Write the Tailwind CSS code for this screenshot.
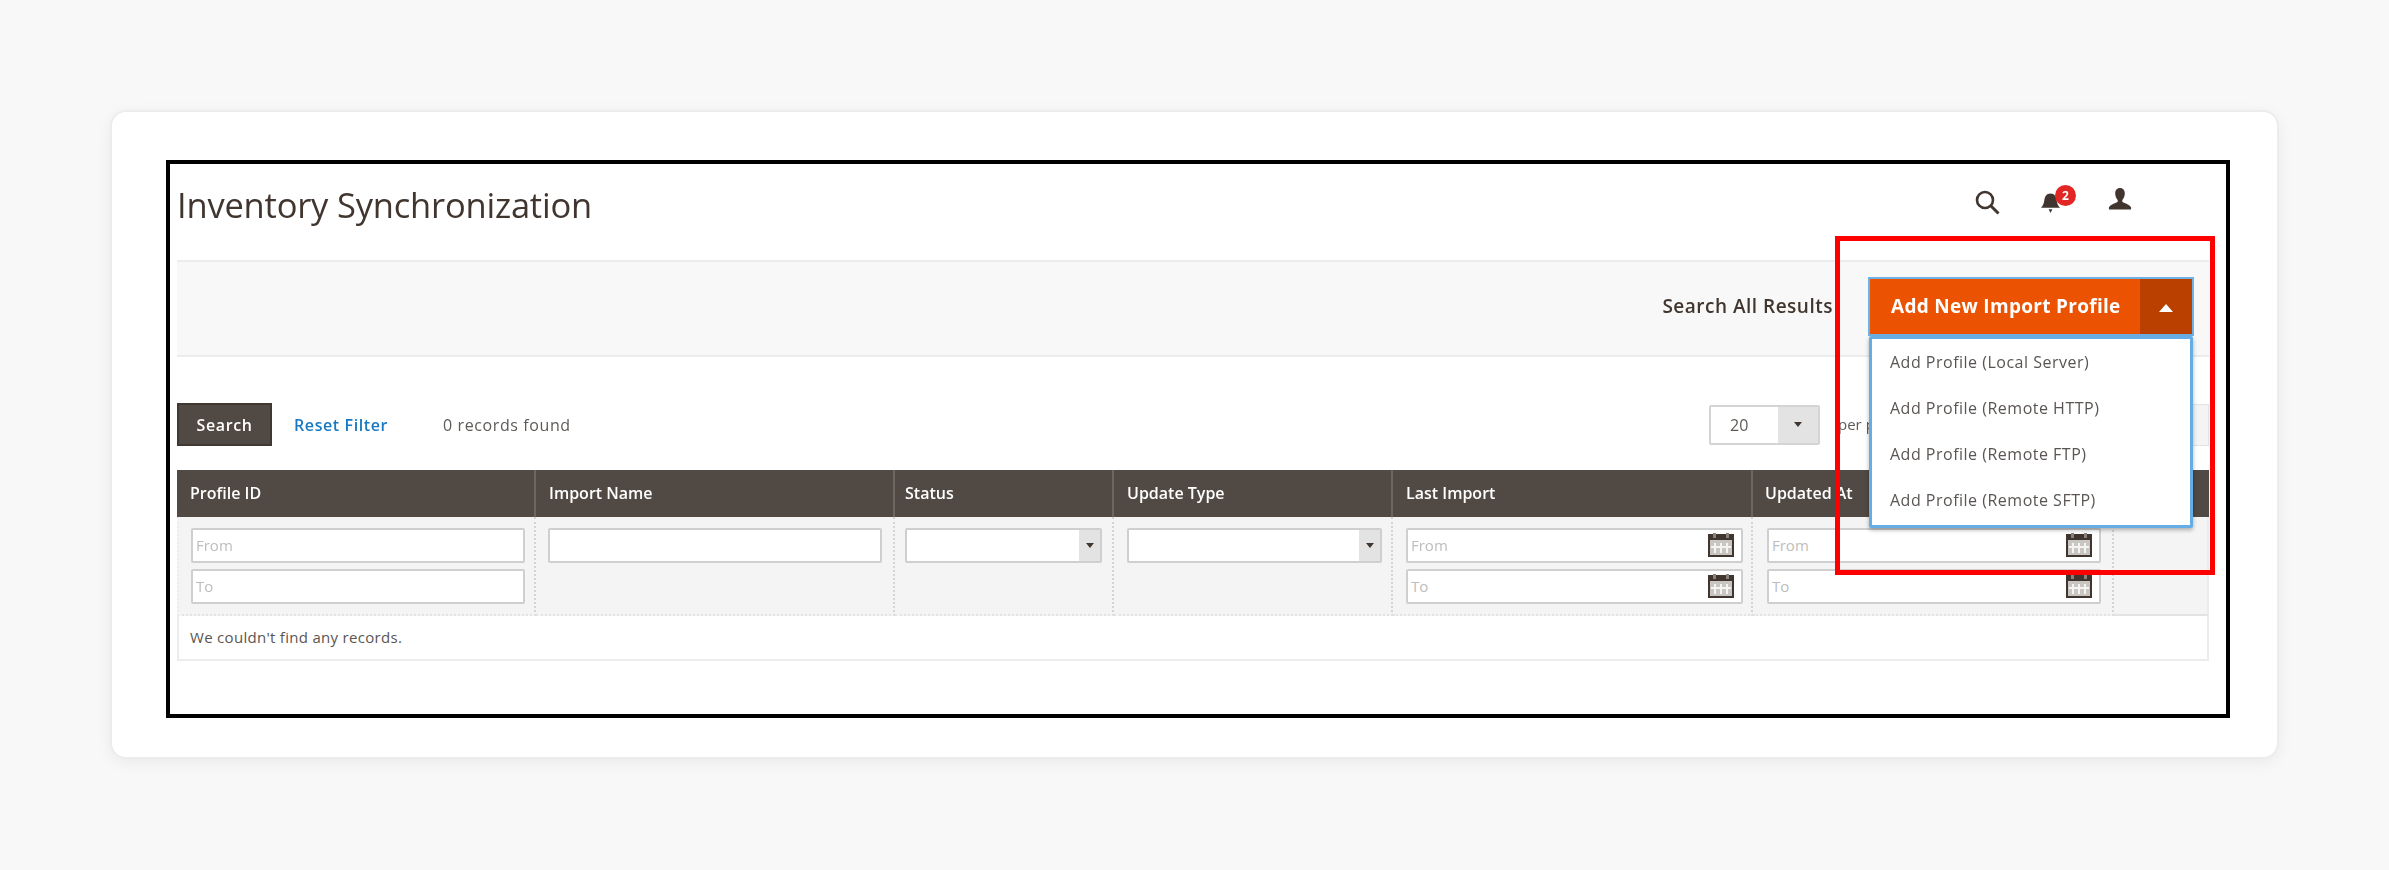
<!DOCTYPE html>
<html lang="en">
<head>
    <meta charset="UTF-8">
    <title>Inventory Synchronization</title>
    <script src="https://cdn.jsdelivr.net/npm/@tailwindcss/browser@4"></script>
</head>
<body class="bg-[#f8f8f8] font-['Open_Sans',sans-serif] text-[#41362f] h-[870px] w-[2389px] overflow-hidden">
    <div class="pl-[110px] pt-[110px]">
        <!-- outer card -->
        <div class="w-[2169px] h-[649px] bg-white rounded-2xl border-2 border-[#ececec] shadow-[0_4px_16px_rgba(0,0,0,0.06)] pl-[54px] pt-[48px]">
            <!-- black frame -->
            <div class="relative w-[2064px] h-[558px] border-4 border-black bg-white">
              <div class="blur-[0.5px] h-full pl-[7px] pr-[17px]">

                <!-- page title -->
                <div class="h-[96px] flex items-start justify-between">
                    <h1 class="mt-[16px] text-[34.500px] leading-[50px] font-normal tracking-[-0.2px] text-[#41362f]">Inventory Synchronization</h1>
                    <div class="relative h-full w-0">
                        <svg class="absolute left-[-235px] top-[25px] w-[26px] h-[26px]" viewBox="0 0 26 26" fill="none" stroke="#41362f"><circle cx="11" cy="11" r="8" stroke-width="2.6"/><path d="M17 17l7.5 7.5" stroke-width="3"/></svg>
                        <svg class="absolute left-[-168px] top-[27px] w-[19px] h-[24px]" viewBox="0 0 20 24" fill="#41362f"><path d="M10 2c4 0 6 3 6.500 7 .4 3.500 1.500 6 3.500 8H0c2-2 3.100-4.500 3.500-8C4 5 6 2 10 2z"/><path d="M8 18.500h4l-2 4z"/></svg>
                        <span class="absolute left-[-154px] top-[21px] w-[21px] h-[21px] rounded-full bg-[#e22626] border-2 border-[#e22626] text-white text-[12px] font-bold leading-[17px] text-center">2</span>
                        <svg class="absolute left-[-101px] top-[23px] w-[24px] h-[24px]" viewBox="0 0 26 26" fill="#41362f"><path d="M13 1c3.300 0 5.200 2.400 5.200 6 0 3-1.300 5.500-2.700 7v2c1.500 1.300 7.500 2.500 9.500 6v2.500H1V22c2-3.500 8-4.700 9.500-6v-2C9.100 12.500 7.800 10 7.800 7c0-3.600 1.900-6 5.200-6z"/></svg>
                    </div>
                </div>

                <!-- page actions -->
                <div class="h-[97px] bg-[#f8f8f8] border-y-2 border-[#ececec] flex items-start justify-end pr-[15px]">
                    <span class="mt-[32px] text-[19px] leading-[24px] font-semibold tracking-[0.500px] mr-[35px] text-[#41362f]">Search All Results</span>
                    <div class="mt-[15px] relative w-[326px] h-[59px] flex border-2 border-[#6eb1e6] z-10">
                        <button class="flex-1 bg-[#eb5202] text-white text-[19px] font-bold tracking-[0.300px] text-left pl-[21px]">Add New Import Profile</button>
                        <button class="w-[52px] bg-[#ba4000] flex items-center justify-center">
                            <span class="mt-[3px] w-0 h-0 border-x-[7px] border-x-transparent border-b-[8px] border-b-white"></span>
                        </button>
                        <ul class="absolute left-[-1px] right-[-1px] top-[57px] h-[192px] bg-white border-[3px] border-[#66ade6] rounded-[2px] shadow-[0_2px_4px_rgba(0,0,0,0.3)] pl-[18px] pt-[11px] text-[16px] tracking-[0.5px] text-[#5a5552] flex flex-col justify-between pb-[13px]">
                            <li>Add Profile (Local Server)</li>
                            <li>Add Profile (Remote HTTP)</li>
                            <li>Add Profile (Remote FTP)</li>
                            <li>Add Profile (Remote SFTP)</li>
                        </ul>
                    </div>
                </div>

                <!-- grid toolbar -->
                <div class="mt-[46px] h-[43px] flex items-center">
                    <button class="w-[95px] h-[43px] bg-[#514943] border-2 border-[#3f3833] text-white text-[16px] font-semibold tracking-[0.6px]">Search</button>
                    <a class="ml-[22px] text-[16px] font-semibold tracking-[0.6px] text-[#1979c3]">Reset Filter</a>
                    <span class="ml-[55px] text-[16px] tracking-[0.6px] text-[#5f5a56]">0 records found</span>
                    <div class="ml-auto w-[500px] flex items-center">
                        <div class="w-[111px] h-[40px] border-2 border-[#d4d4d4] rounded-[2px] flex bg-white">
                            <span class="flex-1 pl-[19px] text-[16px] leading-[36px] text-[#5f5a56]">20</span>
                            <span class="w-[40px] bg-[#e3e3e3] flex items-center justify-center">
                                <span class="w-0 h-0 border-x-[4px] border-x-transparent border-t-[5px] border-t-[#41362f]"></span>
                            </span>
                        </div>
                        <span class="ml-[18px] text-[15px] text-[#5f5a56]">per page</span>
                        <div class="ml-auto w-[100px] h-[42px] bg-[#f4f4f4] border border-[#e3e3e3]"></div>
                    </div>
                </div>

                <!-- table -->
                <div class="mt-[24px] grid grid-cols-[359px_359px_219px_279px_360px_361px_1fr]">
                    <div class="h-[47px] bg-[#514943] border-r-2 border-[#6d655f] pl-[13px] leading-[47px] text-white text-[16px] font-semibold">Profile ID</div>
                    <div class="h-[47px] bg-[#514943] border-r-2 border-[#6d655f] pl-[13px] leading-[47px] text-white text-[16px] font-semibold">Import Name</div>
                    <div class="h-[47px] bg-[#514943] border-r-2 border-[#6d655f] pl-[10px] leading-[47px] text-white text-[16px] font-semibold">Status</div>
                    <div class="h-[47px] bg-[#514943] border-r-2 border-[#6d655f] pl-[13px] leading-[47px] text-white text-[16px] font-semibold">Update Type</div>
                    <div class="h-[47px] bg-[#514943] border-r-2 border-[#6d655f] pl-[13px] leading-[47px] text-white text-[16px] font-semibold">Last Import</div>
                    <div class="h-[47px] bg-[#514943] border-r-2 border-[#6d655f] pl-[12px] leading-[47px] text-white text-[16px] font-semibold">Updated At</div>
                    <div class="h-[47px] bg-[#514943]"></div>

                    <!-- filter row -->
                    <div class="h-[99px] bg-[#f4f4f4] border-l-2 border-b-2 border-r-2 border-l-[#ececec] border-b-[#e3e3e3] border-r-[#d4d4d4] border-dotted pl-[12px] pt-[11px] flex flex-col gap-[6px]">
                        <div class="w-[334px] h-[35px] bg-white border-2 border-[#cfcfcf] rounded-[2px] pl-[3px] text-[15px] leading-[31px] text-[#bdbdbd]">From</div>
                        <div class="w-[334px] h-[35px] bg-white border-2 border-[#cfcfcf] rounded-[2px] pl-[3px] text-[15px] leading-[31px] text-[#bdbdbd]">To</div>
                    </div>
                    <div class="h-[99px] bg-[#f4f4f4] border-b-2 border-r-2 border-b-[#e3e3e3] border-r-[#d4d4d4] border-dotted pl-[12px] pt-[11px]">
                        <div class="w-[334px] h-[35px] bg-white border-2 border-[#cfcfcf] rounded-[2px]"></div>
                    </div>
                    <div class="h-[99px] bg-[#f4f4f4] border-b-2 border-r-2 border-b-[#e3e3e3] border-r-[#d4d4d4] border-dotted pl-[10px] pt-[11px]">
                        <div class="w-[197px] h-[35px] bg-white border-2 border-[#cfcfcf] rounded-[2px] flex justify-end">
                            <span class="w-[21px] bg-[#e3e3e3] flex items-center justify-center"><span class="w-0 h-0 border-x-[4px] border-x-transparent border-t-[5px] border-t-[#41362f]"></span></span>
                        </div>
                    </div>
                    <div class="h-[99px] bg-[#f4f4f4] border-b-2 border-r-2 border-b-[#e3e3e3] border-r-[#d4d4d4] border-dotted pl-[13px] pt-[11px]">
                        <div class="w-[255px] h-[35px] bg-white border-2 border-[#cfcfcf] rounded-[2px] flex justify-end">
                            <span class="w-[21px] bg-[#e3e3e3] flex items-center justify-center"><span class="w-0 h-0 border-x-[4px] border-x-transparent border-t-[5px] border-t-[#41362f]"></span></span>
                        </div>
                    </div>
                    <div class="h-[99px] bg-[#f4f4f4] border-b-2 border-r-2 border-b-[#e3e3e3] border-r-[#d4d4d4] border-dotted pl-[13px] pt-[11px] flex flex-col gap-[6px]">
                        <div class="w-[337px] h-[35px] bg-white border-2 border-[#cfcfcf] rounded-[2px] pl-[3px] text-[15px] leading-[31px] text-[#bdbdbd] flex justify-between">From
                            <svg class="w-[26px] h-[24px] mr-[7px] mt-[3px]" viewBox="0 0 26 24"><rect x="1" y="2" width="24" height="21" fill="#c9c5c1" stroke="#41362f" stroke-width="2"/><rect x="1" y="2" width="24" height="5" fill="#41362f"/><rect x="5" y="0" width="3" height="5" fill="#8a837d"/><rect x="18" y="0" width="3" height="5" fill="#8a837d"/><path d="M7 10v10M13 10v10M19 10v10M3 14h20" stroke="#f4f4f4" stroke-width="2"/></svg>
                        </div>
                        <div class="w-[337px] h-[35px] bg-white border-2 border-[#cfcfcf] rounded-[2px] pl-[3px] text-[15px] leading-[31px] text-[#bdbdbd] flex justify-between">To
                            <svg class="w-[26px] h-[24px] mr-[7px] mt-[3px]" viewBox="0 0 26 24"><rect x="1" y="2" width="24" height="21" fill="#c9c5c1" stroke="#41362f" stroke-width="2"/><rect x="1" y="2" width="24" height="5" fill="#41362f"/><rect x="5" y="0" width="3" height="5" fill="#8a837d"/><rect x="18" y="0" width="3" height="5" fill="#8a837d"/><path d="M7 10v10M13 10v10M19 10v10M3 14h20" stroke="#f4f4f4" stroke-width="2"/></svg>
                        </div>
                    </div>
                    <div class="h-[99px] bg-[#f4f4f4] border-b-2 border-r-2 border-b-[#e3e3e3] border-r-[#d4d4d4] border-dotted pl-[14px] pt-[11px] flex flex-col gap-[6px]">
                        <div class="w-[334px] h-[35px] bg-white border-2 border-[#cfcfcf] rounded-[2px] pl-[3px] text-[15px] leading-[31px] text-[#bdbdbd] flex justify-between">From
                            <svg class="w-[26px] h-[24px] mr-[7px] mt-[3px]" viewBox="0 0 26 24"><rect x="1" y="2" width="24" height="21" fill="#c9c5c1" stroke="#41362f" stroke-width="2"/><rect x="1" y="2" width="24" height="5" fill="#41362f"/><rect x="5" y="0" width="3" height="5" fill="#8a837d"/><rect x="18" y="0" width="3" height="5" fill="#8a837d"/><path d="M7 10v10M13 10v10M19 10v10M3 14h20" stroke="#f4f4f4" stroke-width="2"/></svg>
                        </div>
                        <div class="w-[334px] h-[35px] bg-white border-2 border-[#cfcfcf] rounded-[2px] pl-[3px] text-[15px] leading-[31px] text-[#bdbdbd] flex justify-between">To
                            <svg class="w-[26px] h-[24px] mr-[7px] mt-[3px]" viewBox="0 0 26 24"><rect x="1" y="2" width="24" height="21" fill="#c9c5c1" stroke="#41362f" stroke-width="2"/><rect x="1" y="2" width="24" height="5" fill="#41362f"/><rect x="5" y="0" width="3" height="5" fill="#8a837d"/><rect x="18" y="0" width="3" height="5" fill="#8a837d"/><path d="M7 10v10M13 10v10M19 10v10M3 14h20" stroke="#f4f4f4" stroke-width="2"/></svg>
                        </div>
                    </div>
                    <div class="h-[99px] bg-[#f4f4f4] border-b-2 border-r-2 border-b-[#e3e3e3] border-r-[#ececec]"></div>

                    <!-- empty row -->
                    <div class="col-span-7 h-[45px] bg-white border-2 border-t-0 border-[#ececec] pl-[11px] text-[15px] tracking-[0.3px] leading-[42px] text-[#5a5552]">We couldn't find any records.</div>
                </div>
              </div>

              <!-- callout -->
              <div class="absolute left-[1665px] top-[72px] w-[380px] h-[339px] border-[5px] border-[#ff0000] pointer-events-none z-20"></div>
            </div>
        </div>
    </div>
</body>
</html>
